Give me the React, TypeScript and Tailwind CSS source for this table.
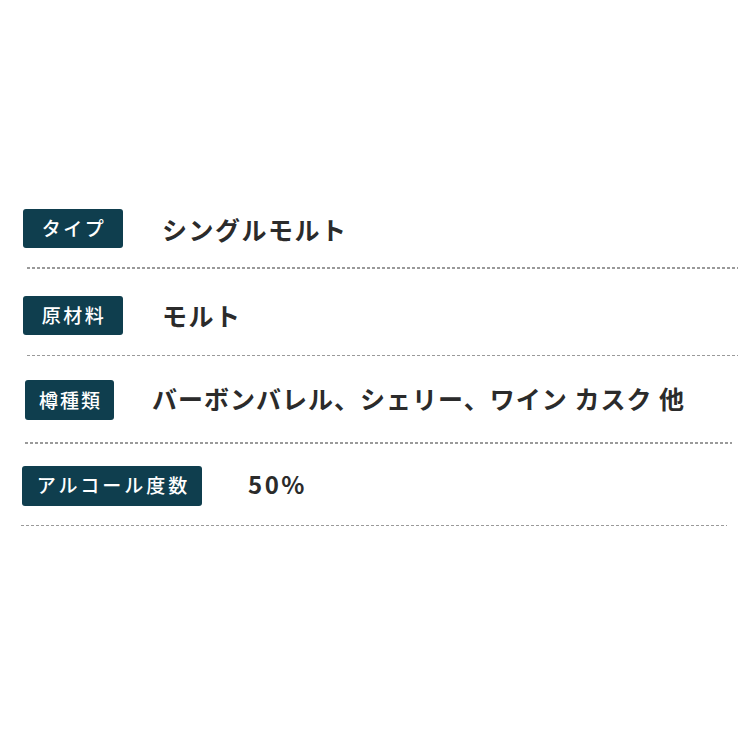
import React from "react";

const font = { fontFamily: '"Noto Sans CJK JP", "Noto Sans", sans-serif' };

function Dash({ cls }: { cls: string }) {
  return (
    <div
      className={`h-[1.5px] bg-[linear-gradient(to_right,#9a9a9a_3px,transparent_3px)] bg-[length:5px_2px] bg-repeat-x ${cls}`}
    />
  );
}

export default function App() {
  return (
    <div className="w-[750px] h-[750px] bg-white pt-[209px]" style={font}>
      {/* Row 1 */}
      <div className="flex items-center">
        <div className="ml-[23px] w-[100px] h-[39px] rounded-[3px] bg-[#0f3e4e] flex items-center justify-center text-white text-[19px] font-medium tracking-[2.5px] pl-[2px]">
          タイプ
        </div>
        <div className="ml-[39px] text-[25px] leading-[30px] font-bold text-[#2b2b2b] tracking-[1.5px]">
          シングルモルト
        </div>
      </div>
      <Dash cls="mt-[19px] ml-[27px] w-[711px]" />

      {/* Row 2 */}
      <div className="flex items-center mt-[27px]">
        <div className="ml-[23px] w-[100px] h-[39px] rounded-[3px] bg-[#0f3e4e] flex items-center justify-center text-white text-[19px] font-medium tracking-[2.5px] pl-[2px]">
          原材料
        </div>
        <div className="ml-[39px] text-[25px] leading-[30px] font-bold text-[#2b2b2b] tracking-[1.5px]">
          モルト
        </div>
      </div>
      <Dash cls="mt-[20px] ml-[27px] w-[711px]" />

      {/* Row 3 */}
      <div className="flex items-center mt-[24px]">
        <div className="ml-[25px] w-[89px] h-[40px] rounded-[3px] bg-[#0f3e4e] flex items-center justify-center text-white text-[19px] font-medium tracking-[2px] pl-[2px]">
          樽種類
        </div>
        <div className="ml-[38px] mb-[5px] text-[25px] leading-[30px] font-bold text-[#2b2b2b] tracking-[1px] whitespace-nowrap">
          バーボンバレル、シェリー、ワイン カスク 他
        </div>
      </div>
      <Dash cls="mt-[22px] ml-[25px] w-[707px]" />

      {/* Row 4 */}
      <div className="flex items-center mt-[22px]">
        <div className="ml-[22px] w-[180px] h-[40px] rounded-[3px] bg-[#0f3e4e] flex items-center justify-center text-white text-[19px] font-medium tracking-[3px] pl-[3px]">
          アルコール度数
        </div>
        <div className="ml-[46px] mb-[3px] text-[24px] leading-[30px] font-bold text-[#2b2b2b] tracking-[2.5px]">
          50%
        </div>
      </div>
      <Dash cls="mt-[19px] ml-[21px] w-[706px]" />
    </div>
  );
}
